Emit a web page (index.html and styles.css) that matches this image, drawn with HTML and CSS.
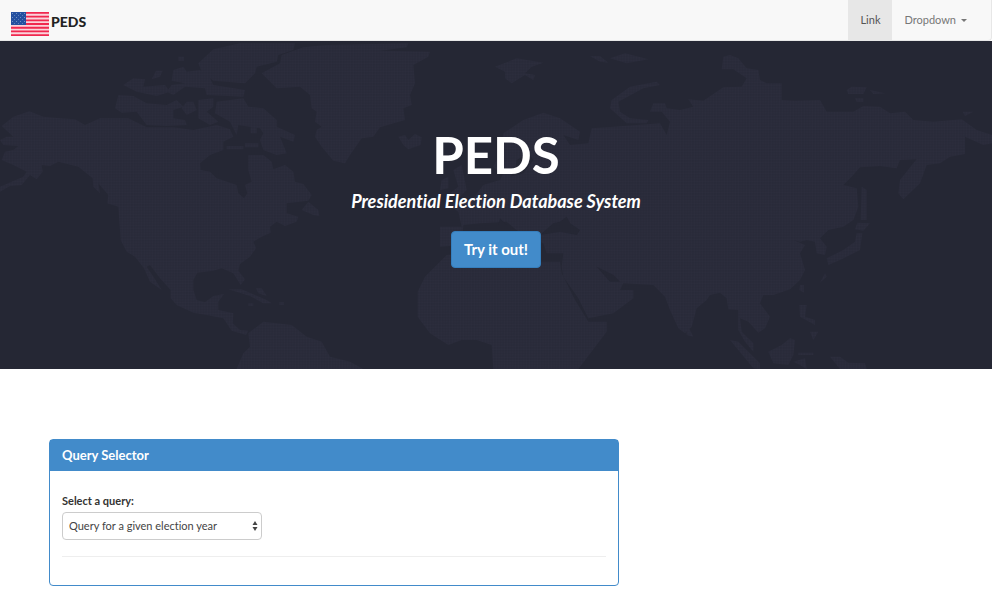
FILE: index.html
```html
<!DOCTYPE html>
<html lang="en">
<head>
<meta charset="utf-8">
<meta name="viewport" content="width=device-width, initial-scale=1">
<title>PEDS</title>
<link rel="stylesheet" href="styles.css">
</head>
<body>
<nav class="navbar">
  <a class="brand" href="#">
    <svg class="flag" viewBox="0 0 38 24" aria-hidden="true">
      <defs>
        <pattern id="stars" width="4" height="4" patternUnits="userSpaceOnUse">
          <rect width="4" height="4" fill="#2450a0"/>
          <rect width="1" height="1" x="1" y="1" fill="#6f91c4"/>
          <rect width="1" height="1" x="3" y="3" fill="#5b80b8"/>
        </pattern>
      </defs>
      <rect width="38" height="24" fill="#fbd3db"/>
      <path d="M0 .92H38M0 4.61H38M0 8.3H38M0 12H38M0 15.7H38M0 19.39H38M0 23.08H38" stroke="#f0284f" stroke-width="1.85"/>
      <rect width="15" height="13" fill="url(#stars)"/>
    </svg>
    <span>PEDS</span>
  </a>
  <div class="nav-links">
    <a class="nav-link active" href="#">Link</a>
    <a class="nav-link" href="#">Dropdown <span class="caret"></span></a>
  </div>
</nav>

<header class="hero">
  <svg class="map" viewBox="0 3 2976 984" preserveAspectRatio="xMidYMid slice" aria-hidden="true">
    <defs>
      <pattern id="dots" width="8.25" height="8.25" patternUnits="userSpaceOnUse">
        <rect width="8.25" height="8.25" fill="#262836"/>
        <rect x="1" y="1" width="6" height="6" fill="#2d2e3e"/>
      </pattern>
    </defs>
    <g class="land">
      <!-- North America -->
      <path d="M5 258L40 230 88 214 130 230 180 235 225 238 255 255 300 235 385 235 440 262 520 262 580 270 650 255 690 268 700 290 670 305 670 330 630 345 600 370 602 390 630 395 650 415 710 435 715 460 732 475 742 460 735 435 755 425 745 390 745 345 790 345 815 365 820 388 855 375 880 395 885 425 910 432 935 465 925 482 860 490 860 520 895 530 890 545 855 558 830 545 810 560 812 578 785 590 760 605 768 625 750 650 720 672 715 692 735 718 722 735 700 700 665 685 640 692 592 698 580 720 580 750 590 780 615 787 640 768 672 762 655 785 655 810 700 820 698 850 720 870 745 872 738 885 695 872 670 835 620 825 580 818 530 795 512 775 512 750 480 715 450 675 440 680 465 718 485 750 450 725 432 685 405 650 380 635 362 600 355 500 322 490 325 465 295 430 300 460 280 440 278 415 235 380 175 365 150 378 125 375 128 395 110 418 90 405 65 435 30 438 0 455 0 440 70 410 80 395 40 375 5 360 15 335 40 330 55 318 10 315 0 300 20 290 40 290Z"/>
      <!-- Arctic islands -->
      <path d="M345 205L355 165 400 168 440 190 500 195 530 180 550 200 520 210 520 235 555 240 560 255 500 258 440 255 410 215 365 218ZM370 135L400 115 435 118 430 140 495 135 510 155 470 168 410 155ZM455 118L468 92 488 92 480 110ZM520 90L550 80 560 95 600 90 630 115 640 135 735 150 730 170 620 165 615 145 555 140 520 165 500 155 515 135 555 130 515 122ZM535 50H552V62H535ZM595 70L640 28 720 10 885 10 880 30 835 45 830 65 770 80 765 100 735 130 640 122 605 95ZM560 185H580L590 210 560 225 545 205ZM595 180L640 175 640 200 620 215 655 245 630 255 595 235ZM650 185L730 175 745 200 790 205 830 240 830 260 885 285 880 305 840 290 860 340 830 345 790 330 780 300 790 280 780 265 715 255 710 285 690 245 645 220ZM735 310H775V322H735ZM752 262H770V280H752ZM680 318H730V328H680ZM905 510L925 485 955 510 958 528 940 525Z"/>
      <!-- Caribbean and South America -->
      <path d="M685 748L725 748 765 765 800 780 815 790 790 790 750 768ZM768 745H785L800 768 775 760ZM838 787H852V795H838ZM745 790H760V797H745ZM710 987L730 940 750 920 745 880 790 845 830 850 875 855 920 890 965 905 990 950 1050 965 1090 987Z"/>
      <!-- Greenland and Iceland -->
      <path d="M785 100L840 70 845 45 910 22 980 15 1225 10 1220 22 1140 32 1290 35 1285 50 1240 75 1245 130 1230 165 1235 195 1210 205 1215 240 1140 262 1120 290 1085 295 1050 345 1035 370 1000 362 965 320 945 290 950 270 965 260 945 245 950 215 935 205 930 165 900 140 830 145ZM1195 290L1215 285 1225 300 1245 282 1265 292 1262 315 1225 328 1210 315Z"/>
      <!-- Svalbard and Franz Josef Land -->
      <path d="M1485 80L1550 55 1630 68 1595 80 1575 100 1605 105 1600 120 1575 105 1535 130 1515 115 1515 95ZM1770 48H1800L1825 68 1800 65ZM1830 55L1875 40 1945 58 1880 70ZM1830 205L1835 180 1890 140 1970 125 1980 135 1930 145 1855 185 1860 215 1890 235 1945 240 1940 250 1880 250Z"/>
      <!-- Europe and Asia -->
      <path d="M1505 330L1510 280 1570 240 1630 218 1680 235 1740 275 1735 300 1690 285 1710 315 1765 310 1775 265 1840 260 1980 250 2000 285 2010 245 1985 215 1950 215 1960 190 1995 190 2000 205 2040 210 2080 200 2065 178 2110 182 2170 142 2225 140 2240 115 2200 88 2165 88 2170 50 2190 45 2215 55 2240 85 2275 90 2280 120 2300 130 2345 130 2345 180 2385 182 2460 180 2480 215 2560 215 2590 198 2640 200 2670 220 2715 215 2740 240 2800 245 2885 238 2930 270 2976 285 2976 310 2950 315 2895 290 2895 342 2850 350 2820 370 2780 375 2760 430 2710 478 2695 460 2700 420 2740 370 2750 358 2700 360 2690 385 2640 378 2580 382 2555 410 2530 435 2570 445 2575 500 2560 540 2530 560 2485 570 2460 595 2480 620 2475 645 2450 640 2445 605 2420 600 2400 605 2380 600 2415 615 2400 640 2415 690 2400 720 2370 748 2320 765 2290 765 2280 790 2310 830 2295 865 2275 878 2245 845 2220 835 2225 875 2260 910 2260 935 2235 905 2215 870 2215 810 2185 808 2180 775 2160 758 2130 765 2120 780 2090 805 2075 860 2055 880 2035 865 2010 810 1995 770 1960 735 1870 730 1860 750 1900 750 1900 775 1840 820 1765 835 1735 775 1690 710 1685 680 1690 640 1640 640 1630 610 1560 580 1520 545 1440 550 1390 555 1385 615 1320 620 1320 560 1385 560 1375 515 1345 495 1420 475 1450 435 1500 420 1520 380 1500 400 1480 380Z"/>
      <path d="M1360 390L1385 375 1400 450 1380 470 1350 460 1375 440ZM1325 420L1345 410 1345 445 1320 450Z"/>
      <!-- Africa -->
      <path d="M1340 645L1440 635 1510 620 1520 650 1590 665 1680 665 1685 700 1725 780 1765 845 1820 845 1820 875 1735 987 1480 987 1475 915 1430 900 1385 900 1345 915 1290 880 1253 830 1253 755 1275 710Z"/>
      <!-- East Asian islands -->
      <path d="M2585 440L2600 450 2600 540 2582 540ZM2572 548L2610 550 2590 572 2565 568ZM2570 580H2587L2580 630 2520 660 2485 675 2480 655 2530 630 2565 605ZM2475 700L2480 710 2460 728ZM2400 735H2412V758L2398 750ZM2398 795L2420 795 2415 830 2445 840 2445 855 2400 830ZM2430 875L2455 875 2440 900ZM2540 150L2555 140 2600 142 2590 162 2545 162ZM2610 150L2655 160 2620 162ZM2565 175H2590V185H2570ZM2888 215H2920L2895 228Z"/>
      <path d="M2060 875L2065 860 2080 890 2060 885ZM2190 900L2215 905 2280 970 2280 987 2260 985ZM2305 935L2345 915 2370 895 2385 900 2380 945 2365 975 2320 970ZM2380 965L2415 955 2420 987 2400 975ZM2395 938H2440V945H2395ZM2490 950L2520 950 2545 968 2595 970 2600 987 2520 987Z"/>
    </g>
    <g class="sea">
      <path d="M1620 585L1660 550 1680 545 1700 530 1710 550 1740 570 1730 585 1680 575ZM1790 680L1840 705 1860 725 1830 725ZM1500 535L1520 555 1495 555ZM1570 400L1600 360 1585 340 1550 360 1545 395 1530 410ZM1440 570H1550L1600 620 1580 650 1510 620Z"/>
    </g>
  </svg>
  <h1 class="hero-title">PEDS</h1>
  <p class="hero-subtitle">Presidential Election Database System</p>
  <a class="hero-button" href="#query-panel">Try it out!</a>
</header>

<main class="content">
  <section class="panel" id="query-panel">
    <h2 class="panel-heading">Query Selector</h2>
    <form class="panel-body">
      <label class="field-label" for="query">Select a query:</label>
      <div class="select-wrap">
        <select class="select" id="query">
          <option>Query for a given election year</option>
        </select>
        <svg class="select-arrows" viewBox="0 0 6 10" aria-hidden="true"><path d="M3 0L5.5 4H.5ZM3 10L.5 6H5.5Z" fill="#444"/></svg>
      </div>
      <hr class="divider">
    </form>
  </section>
</main>
</body>
</html>
```
FILE: styles.css
```css
* {
  box-sizing: border-box;
}

body {
  margin: 0;
  background: #fff;
  color: #333;
  font-family: Lato, "Liberation Sans", sans-serif;
  font-size: 11px;
  font-variant-ligatures: none;
  line-height: 16px;
}

.navbar {
  display: flex;
  justify-content: space-between;
  height: 41px;
  padding: 0 12px 0 11px;
  background: #f8f8f8;
  border: solid #e7e7e7;
  border-width: 0 1px 1px 0;
  border-radius: 0 0 4px 0;
}

.brand {
  display: flex;
  align-items: center;
  gap: 2px;
  padding-top: 4px;
  color: #222;
  font-size: 14px;
  font-weight: 900;
  text-decoration: none;
}

.flag {
  width: 38px;
  height: 24px;
  margin-top: 4px;
}

.nav-links {
  display: flex;
}

.nav-link {
  display: flex;
  align-items: center;
  gap: 5px;
  padding: 0 12px;
  color: #777;
  text-decoration: none;
}

.nav-link.active {
  background: #e7e7e7;
  color: #555;
}

.caret {
  border: solid transparent;
  border-width: 3px 3px 0;
  border-top-color: #777;
}

.hero {
  position: relative;
  display: flex;
  flex-direction: column;
  align-items: center;
  padding: 84px 16px 101px;
  background: #252734;
  color: #fff;
  text-align: center;
}

.map {
  position: absolute;
  inset: 0;
  width: 100%;
  height: 100%;
}

.land {
  fill: url(#dots);
}

.sea {
  fill: #252734;
}

.hero-title,
.hero-subtitle,
.hero-button {
  position: relative;
  margin: 0;
}

.hero-title {
  font-size: 51px;
  line-height: 60px;
}

.hero-subtitle {
  margin: 4px 0 18px;
  font-size: 18px;
  font-style: italic;
  font-weight: 700;
  line-height: 24px;
}

.hero-button {
  padding: 8px 12px;
  border: 1px solid #357ebd;
  border-radius: 4px;
  background: #428bca;
  color: #fff;
  font-size: 15px;
  font-weight: 700;
  line-height: 19px;
  text-decoration: none;
}

.content {
  padding: 70px 49px 21px;
}

.panel {
  width: 100%;
  max-width: 570px;
  border: 1px solid #428bca;
  border-radius: 4px;
}

.panel-heading {
  margin: 0;
  padding: 7px 12px 8px;
  background: #428bca;
  color: #fff;
  font-size: 13px;
  line-height: 16px;
}

.panel-body {
  padding: 22px 12px 28px;
}

.field-label {
  display: block;
  margin-bottom: 3px;
  font-weight: 700;
}

.select-wrap {
  position: relative;
  width: 200px;
}

.select {
  display: block;
  width: 100%;
  height: 28px;
  padding: 0 20px 0 6px;
  border: 1px solid #ccc;
  border-radius: 4px;
  appearance: none;
  background: #fff;
  color: #444;
  font: inherit;
}

.select-arrows {
  position: absolute;
  top: 9px;
  right: 4px;
  width: 6px;
  height: 10px;
  pointer-events: none;
}

.divider {
  margin: 16px 0 0;
  border: 0;
  border-top: 1px solid #eee;
}
```
